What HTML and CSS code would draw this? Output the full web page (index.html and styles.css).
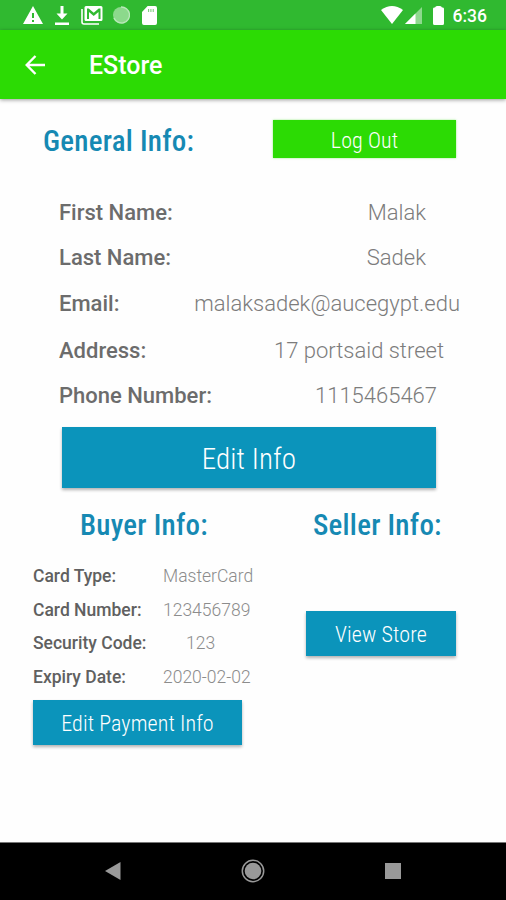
FILE: index.html
```html
<!DOCTYPE html>
<html lang="en">
<head>
  <meta charset="UTF-8">
  <title>EStore</title>
  <meta name="viewport" content="width=device-width, initial-scale=1.0">
  <link rel="stylesheet" href="styles.css">
</head>
<body>
  <div class="status-bar">
    <div class="notifications">
      <svg width="20" height="18" viewBox="0 0 20 18"><path fill="#fff" fill-rule="evenodd" d="M10 0 20 18H0ZM9 7v5h2V7ZM9 14v2h2v-2Z"/></svg>
      <svg width="14" height="19" viewBox="0 0 14 19"><path fill="#fff" d="M5.500 0h3v7.500h4L7 13.500 1.500 7.500h4ZM0 16.500h14V19H0Z"/></svg>
      <svg width="22" height="19" viewBox="0 0 22 19"><path fill="none" stroke="#fff" stroke-width="1.600" d="M1 3v13q0 2 2 2h15"/><path fill="#fff" fill-rule="evenodd" d="M5 0h15q1.500 0 1.500 1.500v12q0 1.500-1.500 1.500H5q-1.500 0-1.500-1.500v-12Q3.500 0 5 0ZM6 2.500V13h2V6l4.700 4L17.500 6v7h2V2.500h-1.800l-5 4.200-5-4.200Z"/></svg>
      <svg class="sync" width="18" height="18" viewBox="0 0 18 18"><circle cx="9" cy="9" r="8" fill="#8cd98c"/><path fill="none" stroke="#b9e8b9" stroke-width="1.500" d="M9 1a8 8 0 1 1-7 11"/></svg>
      <svg width="15" height="19" viewBox="0 0 16 19" preserveAspectRatio="none"><path fill="#fff" d="M6 0h8q2 0 2 2v15q0 2-2 2H2q-2 0-2-2V6Z"/><path stroke="#7fd07f" stroke-width="1.200" d="M7 3v3M9.500 3v3M12 3v3"/></svg>
    </div>
    <div class="system">
      <svg class="wifi" width="22" height="18" viewBox="0 0 22 18"><path fill="#fff" d="M0 4Q11-4 22 4L11 18Z"/></svg>
      <svg class="signal" width="17" height="17" viewBox="0 0 17 17"><path fill="#8ed98e" d="M17 0v17H0Z"/><path fill="#fff" d="M10.500 6.500V17H0Z"/></svg>
      <svg class="battery" width="11" height="19" viewBox="0 0 11 19"><path fill="#fff" d="M2 1.500Q2.500 0 4 0h3q1.500 0 2 1.500h1q1 0 1 1.500v14.500q0 1.500-1.500 1.500h-8Q0 19 0 17.500V3q0-1.500 1-1.500Z"/></svg>
      <span class="clock">6:36</span>
    </div>
  </div>

  <div class="app-bar">
    <svg class="back" width="20" height="20" viewBox="0 0 20 20"><path fill="none" stroke="#fff" stroke-width="2.400" d="M20 10H2M10.500 1 1.700 10l8.800 9"/></svg>
    <h1>EStore</h1>
  </div>

  <main>
    <div class="general-head">
      <h2 class="general-title">General Info:</h2>
      <button class="btn logout-btn">Log Out</button>
    </div>

    <div class="general-list">
      <div class="row first-name"><b>First Name:</b><span>Malak</span></div>
      <div class="row last-name"><b>Last Name:</b><span>Sadek</span></div>
      <div class="row email"><b>Email:</b><span>malaksadek@aucegypt.edu</span></div>
      <div class="row address"><b>Address:</b><span>17 portsaid street</span></div>
      <div class="row phone"><b>Phone Number:</b><span>1115465467</span></div>
    </div>

    <button class="btn edit-btn">Edit Info</button>

    <div class="columns">
      <section class="buyer">
        <h2>Buyer Info:</h2>
        <div class="card-list">
          <div class="card-row"><b>Card Type:</b><span>MasterCard</span></div>
          <div class="card-row"><b>Card Number:</b><span>123456789</span></div>
          <div class="card-row security"><b>Security Code:</b><span>123</span></div>
          <div class="card-row"><b>Expiry Date:</b><span>2020-02-02</span></div>
        </div>
        <button class="btn payment-btn">Edit Payment Info</button>
      </section>
      <section class="seller">
        <h2>Seller Info:</h2>
        <button class="btn store-btn">View Store</button>
      </section>
    </div>
  </main>

  <div class="nav-bar">
    <svg width="16" height="18" viewBox="0 0 16 18"><path fill="#999" d="M15.500 0v18L0 9Z"/></svg>
    <svg width="24" height="24" viewBox="0 0 24 24"><circle cx="12" cy="12" r="8.300" fill="#999"/><circle cx="12" cy="12" r="10.700" fill="none" stroke="#999" stroke-width="1.500"/></svg>
    <svg width="16" height="16" viewBox="0 0 16 16"><path fill="#999" d="M0 0h16v16H0Z"/></svg>
  </div>
</body>
</html>
```

FILE: styles.css
```css
* { box-sizing: border-box; }
html, body {
  margin: 0; padding: 0;
  width: 100%; height: 900px;
  background: #fefefe;
  font-family: Roboto, sans-serif;
  overflow: hidden;
}
body {
  display: flex;
  flex-direction: column;
}
svg { display: block; flex: none; }
h1, h2 { margin: 0; white-space: nowrap; }

.status-bar {
  height: 30px;
  flex: none;
  background: #30b930;
  display: flex;
  justify-content: space-between;
  align-items: center;
  padding: 0 19px 0 23px;
}
.notifications, .system { display: flex; align-items: center; }
.notifications { gap: 12px; }
.sync { margin-left: -3px; }
.signal { margin-left: 2px; }
.battery { margin: 0 9px 0 11px; }
.clock {
  color: #fff;
  font-size: 17.500px;
  font-weight: 500;
  line-height: 30px;
  padding-top: 1px;
}

.app-bar {
  height: 69px;
  flex: none;
  background: #2cdb04;
  box-shadow: 0 1px 4px rgba(0,0,0,0.4);
  display: flex;
  align-items: center;
  gap: 44px;
  padding: 0 25px;
  z-index: 1;
}
.app-bar h1 {
  color: #fff;
  font-size: 25px;
  font-weight: 500;
  padding-top: 2px;
}

main { flex: 1; }
h2 {
  color: #1689b3;
  font-family: "Roboto Condensed", Roboto, sans-serif;
  font-stretch: 75%;
  font-size: 29px;
  font-weight: 500;
  line-height: 34px;
  letter-spacing: 0.25px;
}
.btn {
  display: block;
  border: none;
  padding: 1px 0 0;
  color: #fff;
  background: #0b94bb;
  font-family: "Roboto Condensed", Roboto, sans-serif;
  font-stretch: 75%;
  font-size: 22px;
  font-weight: 350;
  letter-spacing: 0.1px;
  white-space: nowrap;
  box-shadow: 0 2px 3px rgba(0,0,0,0.3);
}

.general-head {
  display: flex;
  justify-content: space-between;
  align-items: center;
  padding: 20px 50px 0 43px;
}
.general-title { padding-top: 5px; }
.logout-btn {
  width: 183px; height: 38px;
  padding-top: 3px;
  background: #2cdb04;
  box-shadow: 0 0 2px rgba(44,219,4,0.5);
}

.general-list { padding: 32px 0 0 59px; }
.row {
  display: flex;
  justify-content: space-between;
  align-items: center;
  height: 45px;
  font-size: 22px;
  color: #6c6c6c;
}
.row b { font-weight: 500; }
.row span { font-weight: 300; color: #7c7c7c; }
.first-name, .last-name { padding-right: 80px; }
.email { height: 46px; padding-right: 46px; }
.address { height: 49px; padding-right: 62px; }
.phone { height: 40px; padding-right: 69px; }

.edit-btn {
  width: 374px; height: 61px;
  padding-top: 3px;
  margin: 12px 0 0 62px;
  font-size: 29px;
}

.columns {
  display: grid;
  grid-template-columns: 272px 1fr;
  padding-top: 20px;
}
.buyer { padding-left: 33px; }
.buyer h2 { padding-left: 47px; }
.card-list { padding: 17px 0 6px; }
.card-row {
  display: grid;
  grid-template-columns: 129px 92px;
  align-items: center;
  height: 33.700px;
  font-size: 17.500px;
  color: #606060;
}
.card-row b { font-weight: 500; }
.card-row span { font-weight: 300; color: #8c8c8c; padding-left: 1px; }
.card-row.security span { padding-left: 24px; }
.payment-btn { width: 209px; height: 45px; padding-top: 2px; }

.seller { padding-left: 34px; }
.seller h2 { padding-left: 7px; }
.store-btn { width: 150px; height: 45px; margin-top: 69px; }

.nav-bar {
  height: 58px;
  flex: none;
  background: #000;
  border-top: 1px solid #777;
  display: flex;
  justify-content: space-between;
  align-items: center;
  padding: 0 105px 2px;
}
```
